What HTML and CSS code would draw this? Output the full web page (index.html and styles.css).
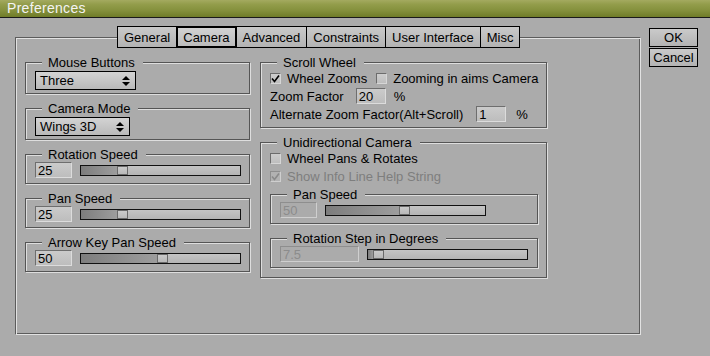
FILE: index.html
```html
<!DOCTYPE html>
<html>
<head>
<meta charset="utf-8">
<title>Preferences</title>
<link rel="stylesheet" href="styles.css">
</head>
<body>
<div class="titlebar">Preferences</div>
<div class="window">
  <div class="prefs">
    <div class="tabs">
      <div class="tab">General</div>
      <div class="tab active">Camera</div>
      <div class="tab">Advanced</div>
      <div class="tab">Constraints</div>
      <div class="tab">User Interface</div>
      <div class="tab">Misc</div>
    </div>
    <div class="panel">
      <div class="col col-left">
        <fieldset class="group group-select">
          <legend>Mouse Buttons</legend>
          <div class="select sel-three"><span>Three</span>
            <svg width="8" height="10" viewBox="0 0 8 10"><path d="M0 4 L4 0 L8 4 Z M0 6 L8 6 L4 10 Z" fill="#000"/></svg>
          </div>
        </fieldset>
        <fieldset class="group group-select">
          <legend>Camera Mode</legend>
          <div class="select sel-wings"><span>Wings 3D</span>
            <svg width="8" height="10" viewBox="0 0 8 10"><path d="M0 4 L4 0 L8 4 Z M0 6 L8 6 L4 10 Z" fill="#000"/></svg>
          </div>
        </fieldset>
        <fieldset class="group group-slider">
          <legend>Rotation Speed</legend>
          <div class="slide-row">
            <input class="field field-short" type="text" value="25">
            <div class="slider"><div class="fill" style="width:36px"></div><div class="thumb"></div></div>
          </div>
        </fieldset>
        <fieldset class="group group-slider">
          <legend>Pan Speed</legend>
          <div class="slide-row">
            <input class="field field-short" type="text" value="25">
            <div class="slider"><div class="fill" style="width:36px"></div><div class="thumb"></div></div>
          </div>
        </fieldset>
        <fieldset class="group group-slider">
          <legend>Arrow Key Pan Speed</legend>
          <div class="slide-row">
            <input class="field field-short" type="text" value="50">
            <div class="slider"><div class="fill" style="width:76px"></div><div class="thumb"></div></div>
          </div>
        </fieldset>
      </div>
      <div class="col col-right">
        <fieldset class="group group-scroll">
          <legend>Scroll Wheel</legend>
          <div class="row">
            <span class="check checked"><svg width="9" height="9" viewBox="0 0 9 9"><path d="M1 4.5 L3.5 7.5 L8 1.5" fill="none" stroke="#000" stroke-width="1.6"/></svg></span>
            <span class="check-label">Wheel Zooms</span>
            <span class="check check-second"></span>
            <span class="check-label">Zooming in aims Camera</span>
          </div>
          <div class="row">
            <span>Zoom Factor</span>
            <input class="field field-zoom" type="text" value="20">
            <span class="pct">%</span>
          </div>
          <div class="row">
            <span>Alternate Zoom Factor(Alt+Scroll)</span>
            <input class="field field-zoom field-alt" type="text" value="1">
            <span class="pct pct-alt">%</span>
          </div>
        </fieldset>
        <fieldset class="group group-uni">
          <legend>Unidirectional Camera</legend>
          <div class="row">
            <span class="check"></span>
            <span class="check-label">Wheel Pans &amp; Rotates</span>
          </div>
          <div class="row disabled">
            <span class="check checked check-disabled"><svg width="9" height="9" viewBox="0 0 9 9"><path d="M1 4.5 L3.5 7.5 L8 1.5" fill="none" stroke="#8a8a8a" stroke-width="1.6"/></svg></span>
            <span class="check-label">Show Info Line Help String</span>
          </div>
          <fieldset class="group group-slider sub-first">
            <legend>Pan Speed</legend>
            <div class="slide-row">
              <input class="field field-short field-off" type="text" value="50" disabled>
              <div class="slider"><div class="fill" style="width:73px"></div><div class="thumb"></div></div>
            </div>
          </fieldset>
          <fieldset class="group group-slider sub-second">
            <legend>Rotation Step in Degrees</legend>
            <div class="slide-row">
              <input class="field field-long field-off" type="text" value="7.5" disabled>
              <div class="slider"><div class="fill" style="width:5px"></div><div class="thumb"></div></div>
            </div>
          </fieldset>
        </fieldset>
      </div>
    </div>
  </div>
  <div class="buttons">
    <button class="btn">OK</button>
    <button class="btn">Cancel</button>
  </div>
</div>
</body>
</html>
```
FILE: styles.css
```css
* { box-sizing: border-box; }

body {
  margin: 0;
  width: 710px;
  height: 356px;
  overflow: hidden;
  background: #ababab;
  color: #000;
  font-family: "Liberation Sans", Arial, sans-serif;
  font-size: 13px;
  line-height: 15px;
}

.titlebar {
  height: 18px;
  padding-left: 7px;
  background: linear-gradient(#a4aa60 0%, #939d4b 25%, #85913d 60%, #6f7c28 100%);
  border-bottom: 1px solid #1a1a1a;
  color: #f4f4f4;
  font-size: 14px;
  line-height: 17px;
  letter-spacing: 0.3px;
}

.window {
  display: flex;
  align-items: flex-start;
  padding: 8px 0 0 15px;
}

.prefs {
  width: 626px;
  display: flex;
  flex-direction: column;
}

.tabs {
  display: flex;
  margin-left: 102px;
  height: 22px;
  position: relative;
  z-index: 1;
}

.tab {
  height: 22px;
  border: 1px solid #000;
  margin-left: -1px;
  padding: 2px 6px 0;
  line-height: 18px;
  background: linear-gradient(#c9c9c9, #b3b3b3);
  white-space: nowrap;
}

.tab:first-child { margin-left: 0; }

.tab.active {
  border: 2px solid #000;
  padding: 1px 5px 0;
  line-height: 17px;
  background: linear-gradient(#d2d2d2, #bcbcbc);
}

.panel {
  margin-top: -11px;
  height: 298px;
  display: flex;
  gap: 10px;
  padding: 17px 9px 0 9px;
  border: 1px solid;
  border-color: #5c5c5c #e2e2e2 #e2e2e2 #5c5c5c;
  box-shadow: inset 1px 1px 0 #e2e2e2, inset -1px -1px 0 #5c5c5c;
}

.col {
  display: flex;
  flex-direction: column;
  gap: 7px;
}

.col-left { width: 225px; }
.col-right { width: 287px; }

.group {
  margin: 0;
  min-width: 0;
  border: 1px solid #555;
  box-shadow: 1px 1px 0 #dedede, inset 1px 1px 0 #dedede;
  padding: 0 8px 5px 9px;
}

.group legend {
  margin-left: 7px;
  padding: 0 8px 0 6px;
  line-height: 15px;
  background: #ababab;
  white-space: nowrap;
}

.group-select { padding-top: 1px; padding-bottom: 3px; }

.select {
  height: 19px;
  border: 1px solid #000;
  background: linear-gradient(#d3d3d3, #b9b9b9);
  display: flex;
  align-items: center;
  justify-content: space-between;
  padding: 0 5px 0 4px;
  line-height: 17px;
}

.sel-three { width: 101px; }
.sel-wings { width: 95px; }

.slide-row {
  display: flex;
  align-items: center;
  gap: 8px;
}

.field {
  height: 16px;
  margin: 0;
  padding: 0 2px;
  font: inherit;
  line-height: 14px;
  color: #000;
  border: 1px solid;
  border-color: #6e6e6e #dcdcdc #dcdcdc #6e6e6e;
  background: linear-gradient(#cbcbcb, #bdbdbd);
  outline: none;
}

.field-short { width: 37px; }
.field-long { width: 79px; }
.field-zoom { width: 30px; margin-left: 12px; }
.field-alt { margin-left: 13px; }

.field-off {
  color: #8c8c8c;
  background: #ababab;
  border-color: #8e8e8e #cfcfcf #cfcfcf #8e8e8e;
}

.slider {
  width: 161px;
  height: 11px;
  border: 1px solid #111;
  display: flex;
  background: linear-gradient(#c4c4c4, #b4b4b4);
}

.slider .fill {
  background: linear-gradient(to right, #7d7d7d, #9d9d9d);
}

.slider .thumb {
  width: 11px;
  background: linear-gradient(#cacaca, #b9b9b9);
  border: 1px solid #6a6a6a;
}

.group-scroll {
  display: flex;
  flex-direction: column;
  gap: 2px;
  padding-bottom: 5px;
}

.row {
  height: 16px;
  display: flex;
  align-items: center;
  white-space: nowrap;
}

.check {
  width: 11px;
  height: 11px;
  border: 1px solid;
  border-color: #6c6c6c #d6d6d6 #d6d6d6 #6c6c6c;
  background: linear-gradient(#cdcdcd, #bebebe);
  display: flex;
  align-items: center;
  justify-content: center;
  flex: none;
}

.check-disabled {
  background: #b2b2b2;
  border-color: #8e8e8e #cfcfcf #cfcfcf #8e8e8e;
}

.check-label { margin-left: 6px; }
.check-second { margin-left: 9px; }

.pct { margin-left: 8px; }
.pct-alt { margin-left: 10px; }

.disabled { color: #7e7e7e; }

.group-uni {
  display: flex;
  flex-direction: column;
  gap: 2px;
  padding-bottom: 9px;
}

.sub-first { margin-top: 1px; }
.sub-second { margin-top: 5px; }

.buttons {
  margin-left: 8px;
  margin-top: 2px;
  display: flex;
  flex-direction: column;
  gap: 1px;
}

.btn {
  width: 49px;
  height: 19px;
  margin: 0;
  padding: 0;
  font: inherit;
  line-height: 17px;
  color: #000;
  border: 1px solid #000;
  background: linear-gradient(#cacaca, #b3b3b3);
}
```
